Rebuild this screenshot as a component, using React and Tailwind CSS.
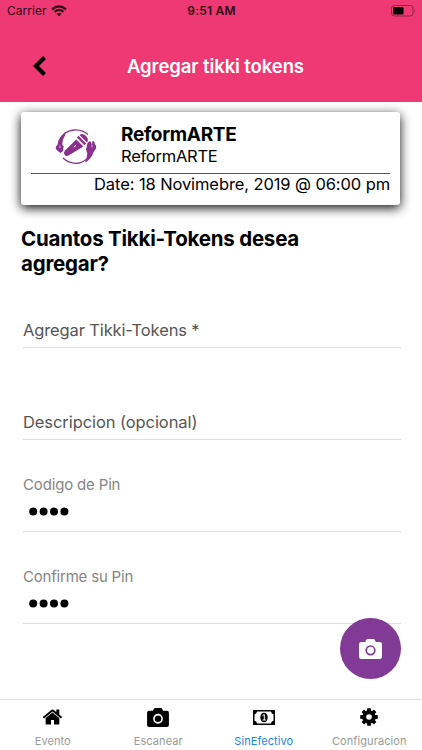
import React from "react";

function Wifi() {
  return (
    <svg className="ml-[4px] h-[12px] w-4" viewBox="0 0 16 12" fill="none" stroke="#300914" strokeWidth="2.2">
      <path d="M1 4.4Q8-1.8 15 4.4M3.4 7Q8 2.9 12.6 7" />
      <path d="M8 11.2L5.4 8.7Q8 6.6 10.6 8.7Z" fill="#300914" stroke="none" />
    </svg>
  );
}

function Battery() {
  return (
    <svg className="h-3 w-[25px]" viewBox="0 0 25 12">
      <rect x="0.5" y="0.5" width="21.5" height="10.5" rx="2.8" fill="none" stroke="#8c2444" />
      <rect x="2" y="2" width="10.5" height="7.5" rx="1.2" fill="#000" />
      <path d="M23.3 4Q25 5.8 23.3 7.6Z" fill="#8c2444" />
    </svg>
  );
}

function Camera({ className, ring }) {
  return (
    <svg className={className} viewBox="0 0 23 20" fill="currentColor">
      <path d="M6.2 3L7 1.2Q7.5 0 8.8 0H14.2Q15.5 0 16 1.2L16.8 3H20.8Q23 3 23 5.2V17.8Q23 20 20.8 20H2.2Q0 20 0 17.8V5.2Q0 3 2.2 3Z" />
      <circle cx="11.5" cy="11.3" r="4.3" fill="none" stroke={ring} strokeWidth="1.7" />
    </svg>
  );
}

function Home() {
  return (
    <svg className="h-[16px] w-[19px]" viewBox="64 240 1600 1310">
      <path d="M1472 992v480q0 26-19 45t-45 19h-384v-384h-256v384h-384q-26 0-45-19t-19-45v-480q0-1 .5-3t.5-3l575-474 575 474q1 2 1 6zm223-69l-62 74q-8 9-21 11h-3q-13 0-21-7l-692-577-692 577q-12 8-24 7-13-2-21-11l-62-74q-8-10-7-23.5t11-21.5l719-599q32-26 76-26t76 26l244 204v-195q0-14 9-23t23-9h192q14 0 23 9t9 23v408l219 182q10 8 11 21.5t-7 23.5z" transform="translate(-32 0)" />
    </svg>
  );
}

function Logo() {
  return (
    <svg className="h-[38px] w-[42px]" viewBox="0 0 42 38" fill="#89318d">
      <path d="M9 5.5Q15 1.6 21 1.8Q28 2 33 6.5" fill="none" stroke="#89318d" strokeWidth="1.3" />
      <path d="M8 30Q15 36.5 24 35Q32 33 36 26" fill="none" stroke="#89318d" strokeWidth="1.3" />
      <path d="M11 4Q3.5 8 2.6 16.5L.7 19Q.3 21.5 2.6 22.8L5.5 25L8 23L8.6 18.5L7.2 16.2L8 11.5Q10 8.5 11 4Z" />
      <path d="M5 17.5V20" stroke="white" strokeWidth=".7" />
      <path d="M32.5 15Q34.8 12 36 14L36.7 17L37.6 13Q39.8 12.5 39.7 16Q42 17.5 40.7 21L38.6 24Q36.5 31 30 34.5Q31.8 30.5 32.3 25.5L31 21.5Z" />
      <path d="M37 17V19.5" stroke="white" strokeWidth=".7" />
      <path d="M21.2 11.4L28.4 18.4L14 27.2Q11.3 28.7 9.7 27Q8.1 25.2 9.7 22.8Z" />
      <path d="M24.4 6.9L32 14.6Q33.9 12 31.7 8.8Q28.6 4.6 24.4 6.9Z" />
      <path d="M22.7 8.7L30.3 16.4" fill="none" stroke="#89318d" strokeWidth="2.4" />
      <path d="M18.8 19.2L21 17.4" stroke="white" strokeWidth="1" />
    </svg>
  );
}

function Money() {
  return (
    <svg className="h-[15px] w-[22px]" viewBox="0 0 22 15">
      <path fillRule="evenodd" d="M0 0H22V15H0ZM4 1.5Q3.7 4 1.5 4.3V10.7Q3.7 11 4 13.5H18Q18.3 11 20.5 10.7V4.3Q18.3 4 18 1.5Z" />
      <ellipse cx="11" cy="7.5" rx="3.7" ry="4.8" />
      <path d="M9.5 5.7L11.3 4.5V10M9.5 10H12.8" fill="none" stroke="white" strokeWidth="1" />
    </svg>
  );
}

function Gear() {
  return (
    <svg className="h-[18px] w-[18px]" viewBox="-9 -9 18 18">
      {[0, 45, 90, 135].map((a) => (
        <rect key={a} x="-1.9" y="-8.8" width="3.8" height="17.6" rx="0.7" transform={`rotate(${a})`} />
      ))}
      <circle r="6.8" />
      <circle r="2.8" fill="white" />
    </svg>
  );
}

function PinField({ label, labelClass }) {
  return (
    <div className="h-[92px] border-b border-[#dedede] pt-[35px]">
      <div className={`text-[15px] leading-5 text-[#858585] ${labelClass}`}>{label}</div>
      <svg className="mt-[12px] ml-[6px] h-[9px] w-[42px]" viewBox="0 0 42 9">
        {[0, 1, 2, 3].map((i) => (
          <circle key={i} cx={4.2 + i * 10.4} cy="4.5" r="4" />
        ))}
      </svg>
    </div>
  );
}

function Tab({ icon, label, className = "text-[#999]" }) {
  return (
    <div className="flex flex-1 flex-col items-center">
      <div className="flex h-[34px] items-center justify-center text-black">{icon}</div>
      <div className={`text-[11px] leading-[15px] tracking-[0.08px] ${className}`}>{label}</div>
    </div>
  );
}

export default function App() {
  return (
    <div className="relative flex h-[750px] w-[422px] flex-col overflow-hidden bg-white font-['Inter',sans-serif] whitespace-nowrap text-black">
      <header className="h-[102px] shrink-0 bg-[#ef3974]">
        <div className="grid h-[22px] grid-cols-3 items-center pr-[6px] pl-[7px] text-[12px] text-[#300914]">
          <div className="flex items-center">
            <span className="tracking-[0.05px]">Carrier</span>
            <Wifi />
          </div>
          <div className="text-center font-semibold tracking-[0.2px]">9:51 AM</div>
          <div className="flex justify-end"><Battery /></div>
        </div>
        <div className="flex h-[88px] items-center">
          <svg className="ml-8 h-5 w-[15px]" viewBox="0 0 15 20" fill="none" stroke="black" strokeWidth="4.2">
            <path d="M12.5 1.6L4 10L12.5 18.4" />
          </svg>
          <h1 className="ml-20 text-[18.5px] leading-6 font-semibold tracking-[-0.1px] text-white">Agregar tikki tokens</h1>
        </div>
      </header>

      <main className="flex-1">
        <section className="mt-[10px] ml-[21px] h-[93px] w-[379px] rounded-[3px] bg-white px-[10px] pt-[10px] shadow-[0_3px_11px_rgba(0,0,0,0.95)]">
          <div className="flex h-[52px] border-b border-[#555]">
            <div className="w-[90px] pt-[6px] pl-6"><Logo /></div>
            <div>
              <div className="pt-px text-[19px] leading-[24px] font-bold tracking-[-0.3px]">ReformARTE</div>
              <div className="-mt-px text-[16.5px] leading-[20px] tracking-[-0.25px]">ReformARTE</div>
            </div>
          </div>
          <div className="text-right text-[16.5px] leading-[20px] tracking-[-0.1px]">Date: 18 Novimebre, 2019 @ 06:00 pm</div>
        </section>
        <h2 className="mt-[21px] ml-[21px] text-[20.5px] leading-[25px] font-bold tracking-[-0.22px]">Cuantos Tikki-Tokens desea<br />agregar?</h2>
        <div className="ml-[23px] w-[378px]">
          <div className="mt-[36px] h-[36px] border-b border-[#dedede] pt-[6px] text-[16.5px] leading-6 tracking-[-0.13px] text-[#555]">Agregar Tikki-Tokens *</div>
          <div className="h-[92px] border-b border-[#dedede] pt-[62px] text-[16.5px] leading-6 tracking-[-0.08px] text-[#555]">Descripcion (opcional)</div>
          <PinField label="Codigo de Pin" labelClass="tracking-[-0.16px]" />
          <PinField label="Confirme su Pin" labelClass="tracking-[-0.2px]" />
        </div>
      </main>

      <button className="absolute top-[618px] left-[340px] flex h-[61px] w-[61px] items-center justify-center rounded-full bg-[#823a97] text-white">
        <Camera className="h-5 w-[23px]" ring="#823a97" />
      </button>

      <nav className="flex h-[51px] shrink-0 border-t border-[#dedede]">
        <Tab icon={<Home />} label="Evento" />
        <Tab icon={<Camera className="h-[19px] w-[22px]" ring="white" />} label="Escanear" />
        <Tab icon={<Money />} label="SinEfectivo" className="text-[#1b83ed]" />
        <Tab icon={<Gear />} label="Configuracion" />
      </nav>
    </div>
  );
}
